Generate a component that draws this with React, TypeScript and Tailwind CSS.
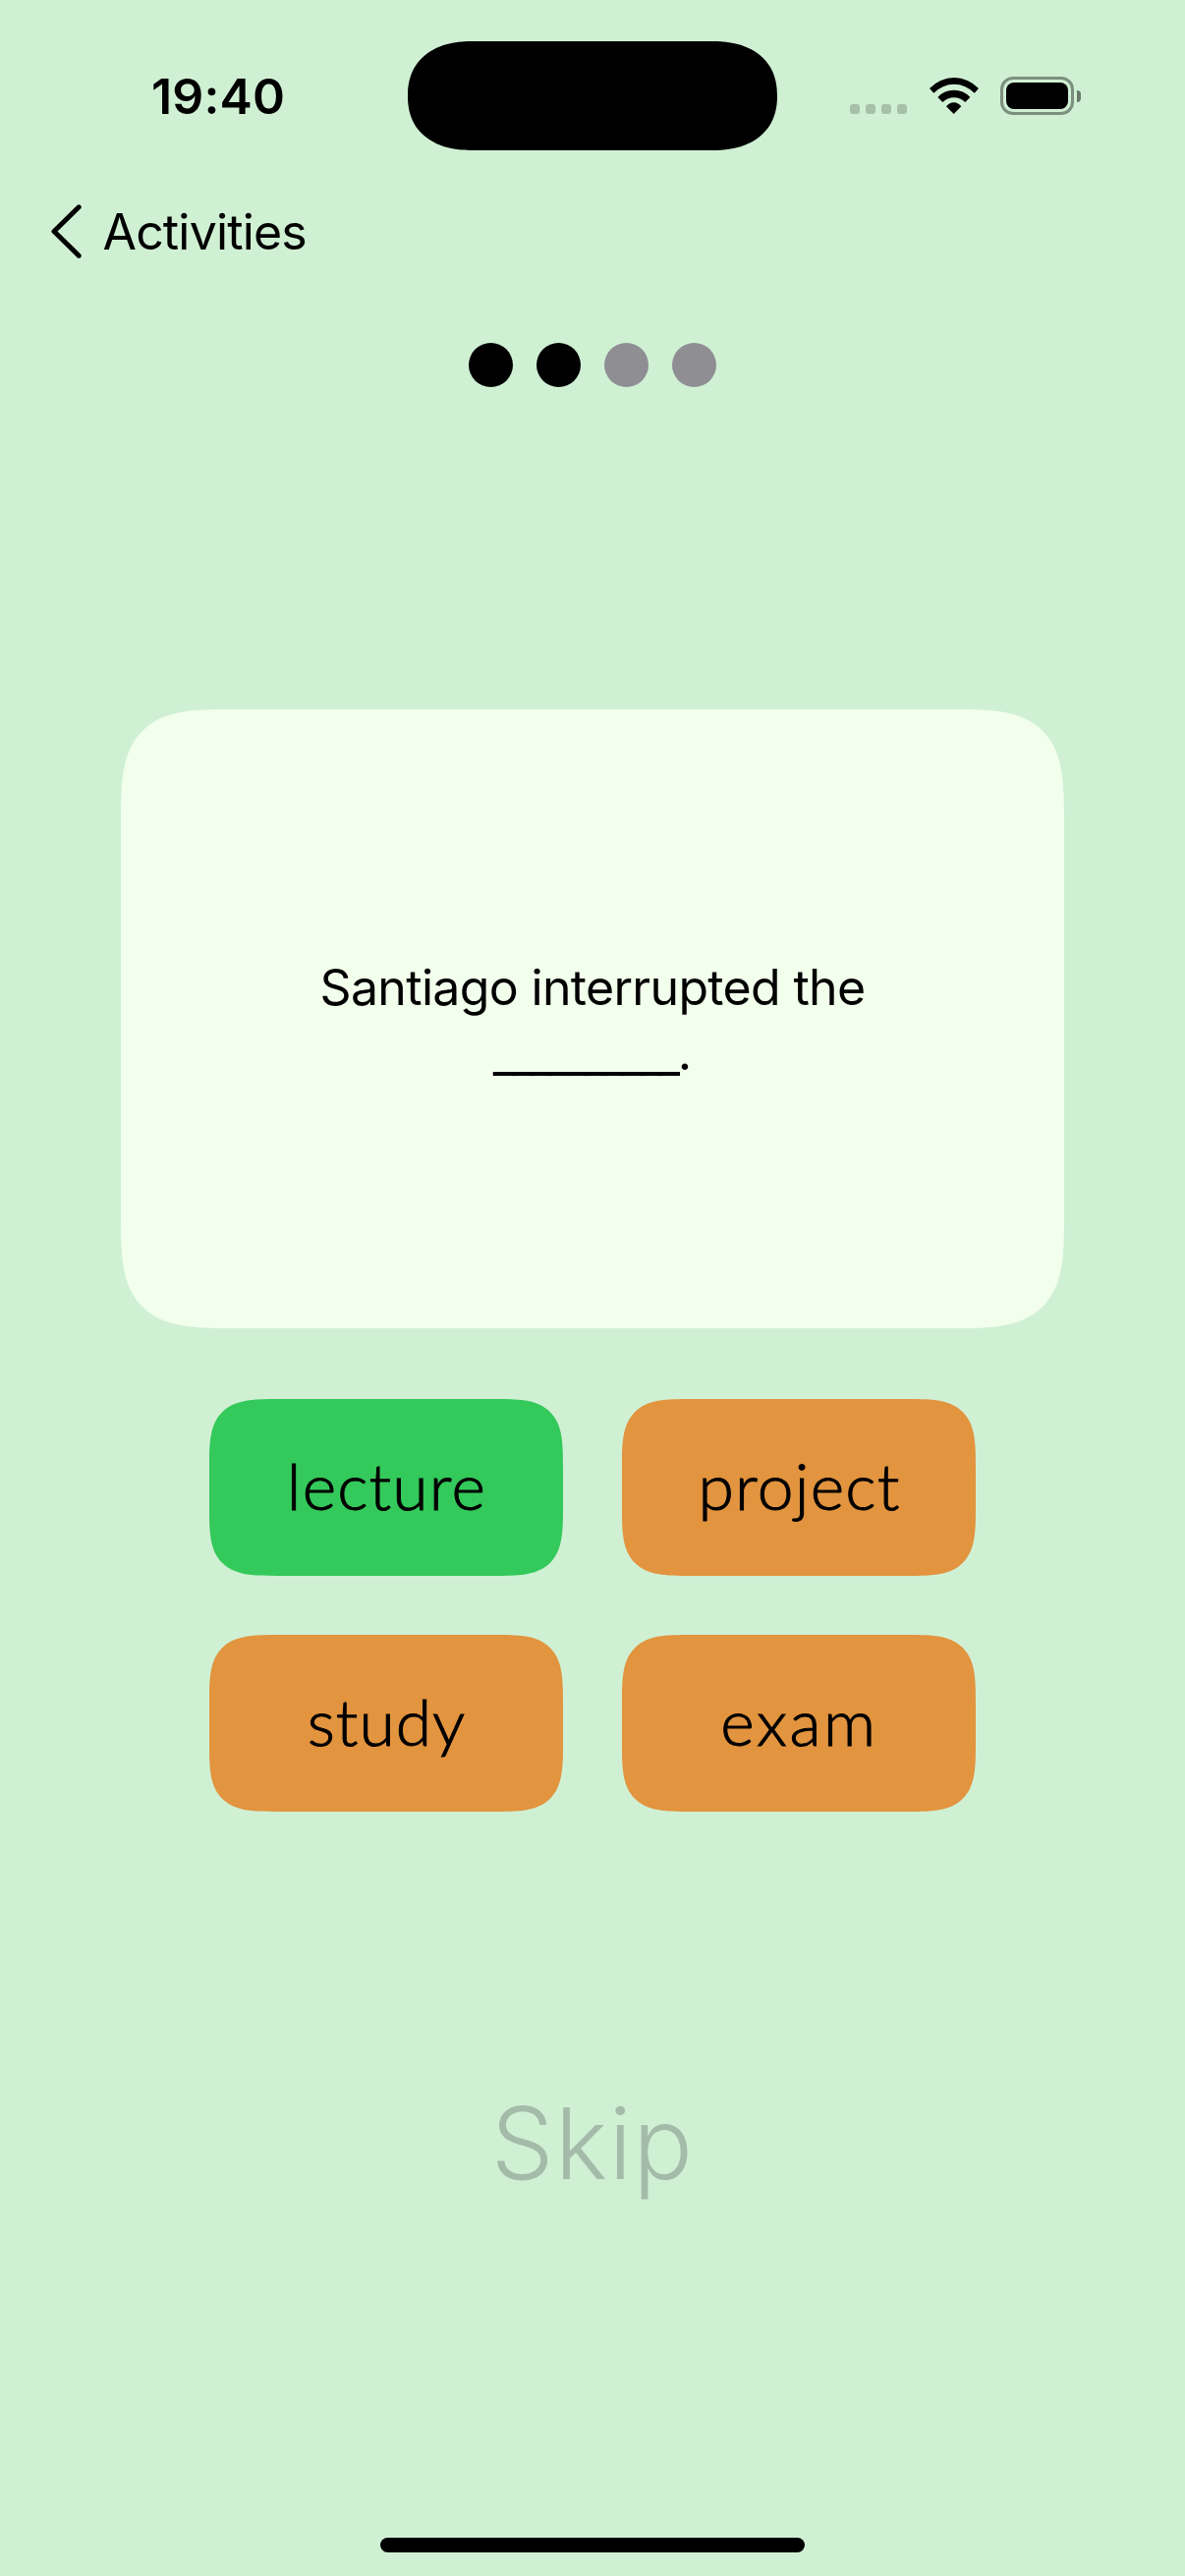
type Answer = { word: string; color: string; tracking: string };

const answers: Answer[] = [
  { word: "lecture", color: "bg-[#34c95b]", tracking: "tracking-[1.2px]" },
  { word: "project", color: "bg-[#e2943f]", tracking: "tracking-[1.2px]" },
  { word: "study", color: "bg-[#e2943f]", tracking: "tracking-[1px]" },
  { word: "exam", color: "bg-[#e2943f]", tracking: "tracking-[2.6px]" },
];

const steps = [true, true, false, false];

function WifiIcon() {
  return (
    <svg className="h-[37px] w-[50px]" viewBox="0 0 150 111" fill="#000">
      <path d="M0 33A102 102 0 0 1 150 33L137 47A86 86 0 0 0 13 47Z" />
      <path d="M25 60A67 67 0 0 1 124 60L109 75A49.5 49.5 0 0 0 40 75Z" />
      <path d="M51 88A28 28 0 0 1 97 88L74 111Z" />
    </svg>
  );
}

function BatteryIcon() {
  return (
    <div className="flex items-center gap-[3px]">
      <div className="h-[39px] w-[75px] rounded-[13px] border-[3px] border-black/40 p-[3px]">
        <div className="h-full w-full rounded-[8px] bg-black" />
      </div>
      <div className="h-[12px] w-[4px] rounded-r-full bg-black/50" />
    </div>
  );
}

function StatusBar() {
  return (
    <div className="flex h-[177px] items-start">
      <div className="mt-[68px] ml-[154px] w-[140px] text-[50px] leading-[60px] font-semibold tracking-[0.15px] whitespace-nowrap">
        19:40
      </div>
      <div className="mt-[41.5px] ml-[121px] h-[111px] w-[376px] rounded-[66px/55.5px] bg-black [corner-shape:superellipse(1.2)]" />
      <div className="mt-[78px] ml-[74px] flex h-[39px] items-start">
        <div className="mt-[28px] flex gap-[6px]">
          {[0, 1, 2, 3].map((i) => (
            <div key={i} className="size-[10px] rounded-[3px] bg-black/20" />
          ))}
        </div>
        <div className="mt-[1px] ml-[22.5px]">
          <WifiIcon />
        </div>
        <div className="ml-[22.5px]">
          <BatteryIcon />
        </div>
      </div>
    </div>
  );
}

export default function App() {
  return (
    <div className="flex h-[2622px] w-[1206px] flex-col overflow-hidden bg-[#d0f0d4] font-['Inter',sans-serif] text-black">
      <StatusBar />

      <div className="flex h-[116px] items-center pl-[52px]">
        <svg
          className="h-[55px] w-[31px]"
          viewBox="0 0 31 55"
          fill="none"
          stroke="#000"
          strokeWidth="5"
          strokeLinecap="round"
          strokeLinejoin="round"
        >
          <path d="M28.2 2.8L3 27.5L28.2 52.2" />
        </svg>
        <span className="ml-[21.5px] pt-[2px] text-[50px] leading-[60px] tracking-[-0.85px]">Activities</span>
      </div>

      <div className="mt-[56px] flex justify-center gap-[24px]">
        {steps.map((done, i) => (
          <div key={i} className={`size-[45px] rounded-full ${done ? "bg-black" : "bg-[#8e8e93]"}`} />
        ))}
      </div>

      <div className="mx-auto mt-[328px] flex h-[630px] w-[960px] flex-col items-center justify-center rounded-[115px] bg-[#f2ffec] pt-[2px] text-[50px] leading-[66px] [corner-shape:superellipse(1.71)]">
        <div className="tracking-[-0.67px]">Santiago interrupted the</div>
        <div>
          <span className="relative top-[2px] mr-[2px] tracking-[-4.2px]">__________</span>.
        </div>
      </div>

      <div className="mx-auto mt-[72px] grid grid-cols-[360px_360px] gap-[60px]">
        {answers.map((a) => (
          <button
            key={a.word}
            className={`flex h-[180px] items-center justify-center rounded-[69px] pb-[6px] pl-[1px] font-['Lato',sans-serif] text-[66px] leading-[79px] font-light [-webkit-text-stroke:1px_black] [corner-shape:superellipse(1.71)] ${a.color} ${a.tracking}`}
          >
            {a.word}
          </button>
        ))}
      </div>

      <button className="mx-auto mt-[277px] text-[101px] leading-[120px] font-[330] tracking-[1.2px] text-[#a4bbaa]">
        Skip
      </button>

      <div className="mx-auto mt-[342px] h-[15px] w-[432px] shrink-0 rounded-full bg-black" />
    </div>
  );
}
